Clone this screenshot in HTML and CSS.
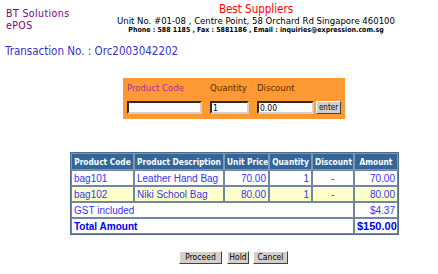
FILE: index.html
```html
<!DOCTYPE html>
<html lang="en">
<head>
  <meta charset="UTF-8">
  <title>BT Solutions ePOS</title>
  <link rel="stylesheet" href="styles.css">
</head>
<body>
<div class="page">

  <div class="header">
    <div class="brand">
      <div>BT Solutions</div>
      <div>ePOS</div>
    </div>
    <div class="supplier">
      <div class="supplier-name">Best Suppliers</div>
      <div class="supplier-address">Unit No. #01-08 , Centre Point, 58 Orchard Rd Singapore 460100</div>
      <div class="supplier-contact">Phone : 588 1185 , Fax : 5881186 , Email : inquiries@expression.com.sg</div>
    </div>
  </div>

  <div class="transaction">Transaction No. : Orc2003042202</div>

  <form class="entry">
    <label class="entry-label code-label" for="code">Product Code</label>
    <label class="entry-label" for="qty">Quantity</label>
    <label class="entry-label" for="disc">Discount</label>
    <span></span>
    <input class="field field-code" id="code" type="text">
    <input class="field field-qty" id="qty" type="text" value="1">
    <input class="field field-disc" id="disc" type="text" value="0.00">
    <button class="btn btn-enter" type="button">enter</button>
  </form>

  <table class="items">
    <colgroup>
      <col class="c-code">
      <col class="c-desc">
      <col class="c-price">
      <col class="c-qty">
      <col class="c-disc">
      <col class="c-amt">
    </colgroup>
    <thead>
      <tr>
        <th>Product Code</th>
        <th>Product Description</th>
        <th>Unit Price</th>
        <th>Quantity</th>
        <th>Discount</th>
        <th>Amount</th>
      </tr>
    </thead>
    <tbody>
      <tr>
        <td>bag101</td>
        <td>Leather Hand Bag</td>
        <td class="num">70.00</td>
        <td class="num">1</td>
        <td class="mid">-</td>
        <td class="num">70.00</td>
      </tr>
      <tr class="alt">
        <td>bag102</td>
        <td>Niki School Bag</td>
        <td class="num">80.00</td>
        <td class="num">1</td>
        <td class="mid">-</td>
        <td class="num">80.00</td>
      </tr>
      <tr>
        <td colspan="5">GST included</td>
        <td class="num">$4.37</td>
      </tr>
      <tr class="total">
        <td colspan="5">Total Amount</td>
        <td class="num total-value">$150.00</td>
      </tr>
    </tbody>
  </table>

  <div class="actions">
    <button class="btn btn-proceed" type="button">Proceed</button>
    <button class="btn btn-hold" type="button">Hold</button>
    <button class="btn btn-cancel" type="button">Cancel</button>
  </div>

</div>
</body>
</html>
```

FILE: styles.css
```css
:root {
  --purple: #800080;
  --blue-text: #3333cc;
  --data-blue: #3535f0;
  --orange: #ff9933;
  --head-blue: #336699;
  --grid-line: #6f87a0;
  --btn-face: #d4d0c8;
}

html, body {
  margin: 0;
  overflow: hidden;
  background: #fff;
}

body {
  font-family: "DejaVu Sans Condensed", "DejaVu Sans", sans-serif;
  color: #000;
}

.page {
  width: 438px;
}

/* header */
.header {
  display: flex;
  padding-top: 2px;
}

.brand {
  width: 70px;
  padding-left: 6px;
  margin-top: 5px;
  font-size: 10.5px;
  line-height: 12px;
  letter-spacing: 0.4px;
  color: var(--purple);
}

.supplier {
  width: 360px;
  text-align: center;
}

.supplier-name {
  font-size: 11.5px;
  line-height: 14px;
  color: #ff0000;
}

.supplier-address {
  font-size: 9.5px;
  line-height: 10px;
  white-space: nowrap;
}

.supplier-contact {
  font-size: 7px;
  line-height: 9px;
  font-weight: bold;
  white-space: nowrap;
}

.transaction {
  margin-top: 10px;
  padding-left: 5px;
  font-size: 11.5px;
  line-height: 13px;
  color: var(--blue-text);
}

/* entry box */
.entry {
  display: grid;
  grid-template-columns: 83px 47px 59px 25px;
  grid-template-rows: 12px 13px;
  row-gap: 7px;
  width: 214px;
  margin: 20px 0 0 123px;
  padding: 4px 4px 5px 4px;
  background: var(--orange);
}

.entry-label {
  font-size: 9.5px;
  line-height: 12px;
  color: #4d3000;
}

.code-label {
  color: #a0309a;
}

.field {
  box-sizing: border-box;
  height: 13px;
  margin: 0;
  padding: 0 1px;
  border: 2px inset #d4d0c8;
  border-top-color: #808080;
  border-left-color: #808080;
  background: #fff;
  font-family: "DejaVu Sans Condensed", "DejaVu Sans", sans-serif;
  font-size: 8.5px;
  color: #000;
}

.field-code { width: 75px; }
.field-qty { width: 39px; }
.field-disc { width: 57px; }

/* buttons */
.btn {
  box-sizing: border-box;
  height: 13px;
  margin: 0;
  padding: 0;
  border: 1px solid;
  border-color: #fff #404040 #404040 #fff;
  background: var(--btn-face);
  font-family: "DejaVu Sans Condensed", "DejaVu Sans", sans-serif;
  font-size: 8.5px;
  line-height: 11px;
  color: #000;
}

.btn-enter { width: 25px; font-size: 8px; }

/* items table */
.items {
  table-layout: fixed;
  width: 327px;
  margin: 33px 0 0 70px;
  border-collapse: separate;
  border-spacing: 0;
  border: 1px solid #4e6c8a;
}

.c-code { width: 63px; }
.c-desc { width: 90px; }
.c-price { width: 45px; }
.c-qty { width: 43px; }
.c-disc { width: 42px; }
.c-amt { width: 44px; }

.items th,
.items td {
  box-sizing: border-box;
  padding: 0 2px;
  border: 1px solid var(--grid-line);
  white-space: nowrap;
  overflow: hidden;
}

.items th {
  height: 17px;
  background: var(--head-blue);
  color: #fff;
  font-size: 8.3px;
  font-weight: bold;
  text-align: center;
  border-color: #7d98b3;
}

.items td {
  height: 16px;
  font-family: "Liberation Sans", Arial, sans-serif;
  font-size: 10px;
  color: var(--data-blue);
}

.items .num { text-align: right; }
.items .mid { text-align: center; }

.items .alt td {
  background: #ffffcc;
}

.items .total td {
  font-weight: bold;
  color: #0000ee;
}

.items .total-value {
  font-size: 11px;
}

/* action buttons */
.actions {
  display: flex;
  gap: 4px;
  margin: 16px 0 0 179px;
}

.btn-proceed { width: 43px; margin-right: 1px; }
.btn-hold { width: 22px; }
.btn-cancel { width: 35px; }
```
